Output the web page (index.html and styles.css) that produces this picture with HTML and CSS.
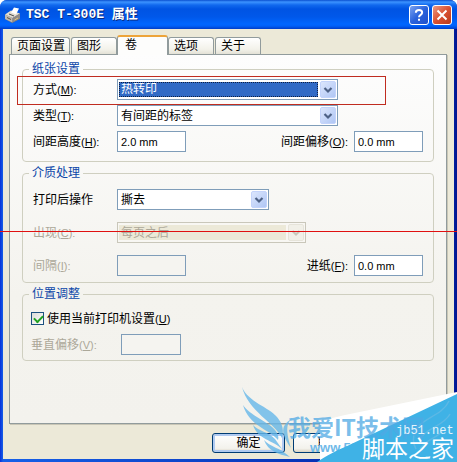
FILE: index.html
```html
<!DOCTYPE html>
<html lang="zh-CN">
<head>
<meta charset="utf-8">
<title>TSC T-300E 属性</title>
<link rel="stylesheet" href="styles.css">
</head>
<body>
<svg class="defs" aria-hidden="true">
  <defs>
    <linearGradient id="arrow-face" x1="0" y1="0" x2="1" y2="1">
      <stop offset="0" stop-color="#dde7fd"/>
      <stop offset="1" stop-color="#aec5f4"/>
    </linearGradient>
    <symbol id="arrow" viewBox="0 0 16 17">
      <rect x="0.5" y="0.5" width="15" height="16" rx="1.5" fill="url(#arrow-face)" stroke="#c3d3fb"/>
      <path d="M4.5 7 8 10.5 11.500 7" fill="none" stroke="#4d6185" stroke-width="2.2"/>
    </symbol>
    <symbol id="arrow-off" viewBox="0 0 16 17">
      <rect x="0.5" y="0.5" width="15" height="16" rx="1.5" fill="#f1f0e8" stroke="#e6e4da"/>
      <path d="M4.5 7 8 10.5 11.500 7" fill="none" stroke="#cac8bb" stroke-width="2.2"/>
    </symbol>
  </defs>
</svg>

<div class="window">
  <header class="titlebar">
    <svg class="app-icon" viewBox="0 0 16 16" aria-hidden="true">
      <path d="M0 8 6 4l9 3v5l-8 4-7-4z" fill="#77777b"/>
      <path d="M0 7.500 6 3.500l9 3L7.500 11z" fill="#e2ddd2"/>
      <path d="M0 7.500 7.500 11V15.500L0 12z" fill="#bdb9b3"/>
      <path d="M7.500 11 15 6.500v5l-7.500 4z" fill="#8d8a88"/>
      <path d="M6 5.500 9 0.500l5 1-3 6z" fill="#fff"/>
      <path d="M4 7 9 9" stroke="#4c4c4c"/>
      <path d="M2 10.500 6 12.500" stroke="#605040"/>
      <path d="M9.500 13 13 11" stroke="#e7c878"/>
    </svg>
    <h1 class="title">TSC T-300E 属性</h1>
    <button class="caption" type="button" aria-label="帮助">
      <svg viewBox="0 0 20 20" aria-hidden="true"><path d="M6.500 7.500C6.500 3.500 13.500 3.500 13.500 7.500 13.500 10 10 9.800 10 12.500M10 14.200V16.400" fill="none" stroke="#fff" stroke-width="2.2"/></svg>
    </button>
    <button class="caption caption-close" type="button" aria-label="关闭">
      <svg viewBox="0 0 20 20" aria-hidden="true"><path d="M5 5 15 15M15 5 5 15" stroke="#fff" stroke-width="2.2"/></svg>
    </button>
  </header>

  <main class="body">
    <div class="tabs" role="tablist">
      <button class="tab tab-wide" type="button" role="tab">页面设置</button>
      <button class="tab" type="button" role="tab">图形</button>
      <button class="tab tab-active" type="button" role="tab" aria-selected="true">卷</button>
      <button class="tab" type="button" role="tab">选项</button>
      <button class="tab" type="button" role="tab">关于</button>
    </div>

    <form class="panel" id="roll">
      <fieldset class="group">
        <legend>纸张设置</legend>
        <div class="row marked">
          <label for="mode">方式<span class="key">(<u>M</u>):</span></label>
          <div class="combo combo-focus">
            <select id="mode"><option>热转印</option></select>
            <svg class="arrow" aria-hidden="true"><use href="#arrow"/></svg>
          </div>
        </div>
        <div class="row">
          <label for="type">类型<span class="key">(<u>T</u>):</span></label>
          <div class="combo">
            <select id="type"><option>有间距的标签</option></select>
            <svg class="arrow" aria-hidden="true"><use href="#arrow"/></svg>
          </div>
        </div>
        <div class="row">
          <label for="gap-height">间距高度<span class="key">(<u>H</u>):</span></label>
          <input class="field" id="gap-height" value="2.0 mm">
          <label class="second" for="gap-offset">间距偏移<span class="key">(<u>O</u>):</span></label>
          <input class="field" id="gap-offset" value="0.0 mm">
        </div>
      </fieldset>

      <fieldset class="group group-media">
        <legend>介质处理</legend>
        <div class="row">
          <label for="after">打印后操作</label>
          <div class="combo combo-short">
            <select id="after"><option>撕去</option></select>
            <svg class="arrow" aria-hidden="true"><use href="#arrow"/></svg>
          </div>
        </div>
        <div class="row off">
          <label for="occurs">出现<span class="key">(<u>C</u>):</span></label>
          <div class="combo combo-medium">
            <select id="occurs" disabled><option>每页之后</option></select>
            <svg class="arrow" aria-hidden="true"><use href="#arrow-off"/></svg>
          </div>
        </div>
        <div class="row">
          <label class="muted" for="interval">间隔<span class="key">(<u>I</u>):</span></label>
          <input class="field" id="interval" disabled>
          <label class="second" for="feed">进纸<span class="key">(<u>F</u>):</span></label>
          <input class="field" id="feed" value="0.0 mm">
        </div>
      </fieldset>

      <fieldset class="group group-position">
        <legend>位置调整</legend>
        <div class="check-row">
          <input class="check" type="checkbox" id="use-current" checked>
          <label for="use-current">使用当前打印机设置<span class="key">(<u>U</u>)</span></label>
        </div>
        <div class="row row-vertical">
          <label class="muted" for="vertical">垂直偏移<span class="key">(<u>V</u>):</span></label>
          <input class="field field-short" id="vertical" disabled>
        </div>
      </fieldset>
    </form>

    <footer class="actions">
      <button class="button button-default" type="submit" form="roll">确定</button>
      <button class="button" type="button">取消</button>
    </footer>
  </main>

  <div class="divider"></div>
  <svg class="watermark" viewBox="0 0 222 82" aria-hidden="true">
    <path d="M85 82V41L110 35 222 12V82z" fill="#fff"/>
    <g fill="#65b7e8" fill-opacity=".8">
      <path d="M7 7C13 22 34 27 42 37 48 44 49 51 47 58 40 43 13 31 7 7z"/>
      <path d="M8 25C14 35 34 42 40 50 43 54 44 57 43 60 34 49 14 46 8 25z"/>
      <path d="M18 45C23 51 34 52 40 59L47 69C38 60 23 60 18 45z"/>
      <path d="M29 60C35 67 44 67 55 77 43 74 33 71 29 60z"/>
      <path d="M57 39C49 44 53 58 56 68 48 57 43 46 57 39z"/>
    </g>
    <text class="mark-url" x="75" y="72">www.52</text>
    <path d="M82 82C93 75 100 71 110 67L222 14V82z" fill="#3fb2e6"/>
    <g fill="none" stroke="#67b9e4" stroke-opacity=".75" stroke-width="1.500">
      <path d="M214 21C208 35 188 38 181 49 177 56 178 64 181 69"/>
      <path d="M215 34C209 46 191 48 185 59"/>
      <path d="M208 50C202 59 192 58 185 69"/>
    </g>
    <text class="mark-name" x="53" y="56">我爱IT技术网</text>
    <text class="site-url" x="161" y="54">jb51.net</text>
    <text class="site-name" x="127" y="77">脚本之家</text>
  </svg>
</div>
</body>
</html>
```
FILE: styles.css
```css
* {
  box-sizing: border-box;
}

body {
  margin: 0;
  background: #fff;
  color: #000;
  font: 12px/14px "Liberation Sans", "Noto Sans CJK SC", sans-serif;
}

button,
input,
select {
  margin: 0;
  color: inherit;
  font: inherit;
}

.defs {
  position: absolute;
  width: 0;
  height: 0;
}

.window {
  position: relative;
  display: flex;
  flex-direction: column;
  min-height: 100vh;
  padding: 0 3px 3px;
  overflow: hidden;
  border-radius: 7px 7px 0 0;
  background: linear-gradient(90deg, #0831d9, #1660e8 3px, #001ea0 calc(100% - 3px), #00138c);
}

.titlebar {
  display: flex;
  align-items: center;
  gap: 3px;
  height: 29px;
  margin: 0 -3px;
  padding: 1px 5px 0;
  background: linear-gradient(#0a50d0, #3c93ff 2px, #1169ee 5px, #0054e3 9px, #0058ea 17px, #0066ff 24px, #0060f8 26px, #003dc8);
}

.app-icon {
  width: 16px;
  height: 16px;
}

.title {
  flex: 1;
  margin: 0 2px;
  color: #fff;
  font: bold 13px/16px "Liberation Mono", "Noto Sans CJK SC", monospace;
  text-shadow: 1px 1px #0a2a80;
}

.caption {
  width: 20px;
  height: 20px;
  padding: 0;
  border: 1px solid #fff;
  border-radius: 3px;
  background: linear-gradient(135deg, #7ba2f0, #2a62dc 50%, #1d50cc);
}

.caption-close {
  background: linear-gradient(135deg, #eb9a83, #da5132 50%, #b83a1c);
}

.caption svg {
  display: block;
  width: 18px;
  height: 18px;
}

.body {
  flex: 1;
  padding: 6px 7px 6px 6px;
  background: #ece9d8;
}

.tabs {
  display: flex;
  align-items: flex-end;
  height: 19px;
  padding-left: 2px;
}

.tab {
  width: 46px;
  height: 17px;
  margin-right: 1px;
  padding: 0 5px;
  border: 1px solid #919b9c;
  border-bottom: 0;
  border-radius: 3px 3px 0 0;
  background: linear-gradient(#fff, #f3f2ea 70%, #e3e1d6);
  text-align: left;
  white-space: nowrap;
}

.tab-wide {
  width: 59px;
}

.tab-active {
  z-index: 1;
  width: 51px;
  height: 20px;
  margin: 0 0 -1px -1px;
  padding: 0 7px 2px;
  border-top: 2px solid #eda43a;
  background: #fdfdfc;
}

.panel {
  padding: 7px 12px 62px;
  border: 1px solid #919b9c;
  box-shadow: 1px 1px #c9c6b6;
  background: linear-gradient(#fdfdfd, #f4f3ee 65%, #f3f2ed);
}

.group {
  display: flex;
  flex-direction: column;
  gap: 5px;
  min-width: 0;
  margin: 0 0 4px;
  padding: 3px 10px 9px;
  border: 1px solid #cfcfc0;
  border-radius: 4px;
}

.group-media {
  gap: 12px;
  padding: 9px 10px 6px;
}

.group-position {
  gap: 8px;
  padding: 10px 8px 5px;
  margin: 0;
}

legend {
  margin-left: -4px;
  padding: 0 3px;
  color: #0b46a8;
}

.group-position legend {
  margin-left: -2px;
}

.key {
  font-size: 11px;
}

.row {
  position: relative;
  display: grid;
  grid-template-columns: 84px 69px 1fr 69px;
  align-items: center;
  height: 21px;
}

.row-vertical {
  grid-template-columns: 90px 60px;
}

.marked::after {
  content: "";
  position: absolute;
  top: -3px;
  left: -16px;
  width: 367px;
  height: 27px;
  border: 1px solid #c02c20;
  pointer-events: none;
}

.second {
  padding-right: 6px;
  text-align: right;
}

.off,
.muted {
  color: #aca899;
}

.field {
  width: 100%;
  height: 21px;
  padding: 0 3px;
  border: 1px solid #7f9db9;
  background: #fff;
  font-size: 11px;
}

.field:disabled {
  background: #f5f4f0;
}

.combo {
  display: flex;
  grid-column: 2 / -1;
  align-items: center;
  gap: 2px;
  width: 221px;
  height: 21px;
  padding: 1px;
  border: 1px solid #7f9db9;
  background: #fff;
}

.combo-short {
  width: 152px;
}

.combo-medium {
  width: 189px;
}

.combo select {
  appearance: none;
  flex: 1;
  min-width: 0;
  height: 15px;
  padding: 0 2px;
  border: 0;
  border-radius: 0;
  outline: 0;
  background: none;
}

.combo-focus select {
  padding: 0 1px;
  border: 1px dotted #102040;
  background: #316ac5;
  color: #fff;
  line-height: 13px;
}

.off .combo {
  border-color: #c9c7ba;
  background: #f8f7f3;
}

.off select {
  background: #ece9d8;
  color: #aca899;
  opacity: 1;
}

.arrow {
  flex: none;
  width: 16px;
  height: 17px;
}

.check-row {
  display: flex;
  align-items: center;
  gap: 3px;
  height: 15px;
}

.check {
  appearance: none;
  width: 13px;
  height: 13px;
  border: 1px solid #1c5180;
  background: linear-gradient(135deg, #dcdcd7, #fff);
}

.check:checked::before {
  content: "";
  display: block;
  width: 7px;
  height: 4px;
  margin: 2px;
  border: solid #21a121;
  border-width: 0 0 2px 2px;
  transform: rotate(-45deg);
}

.actions {
  display: flex;
  justify-content: flex-end;
  gap: 8px;
  padding: 9px 81px 0 0;
}

.button {
  width: 73px;
  height: 20px;
  padding: 0;
  border: 1px solid #003c74;
  border-radius: 3px;
  background: linear-gradient(#fff, #f3f2ec 80%, #d8d2c2);
}

.button-default {
  box-shadow: inset 0 0 0 2px #b0caf0;
}

.divider {
  position: absolute;
  z-index: 2;
  top: 50%;
  right: 0;
  left: 0;
  border-top: 1px solid #e01010;
}

.watermark {
  position: absolute;
  right: 0;
  bottom: 0;
  width: 222px;
  height: 82px;
  pointer-events: none;
}

.mark-name {
  fill: #4fa9e4;
  fill-opacity: 0.75;
  font: bold 23px "Noto Sans CJK SC", sans-serif;
}

.mark-url {
  fill: #6fb9e8;
  font: bold 13px "Liberation Sans", sans-serif;
}

.site-url {
  fill: #e4f4fc;
  font: 12px "Liberation Mono", monospace;
}

.site-name {
  fill: #fff;
  font: 23px "Noto Sans CJK SC", sans-serif;
}
```
